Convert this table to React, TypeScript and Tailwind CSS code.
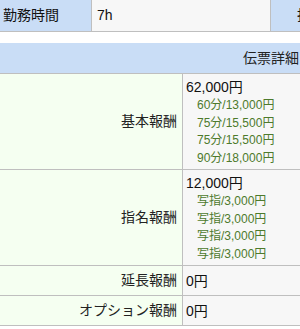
const font = { fontFamily: '"Liberation Sans", "Noto Sans CJK JP", sans-serif' };

type Row = { label: string; total: string; items: string[] };

const rows: Row[] = [
  {
    label: "基本報酬",
    total: "62,000円",
    items: ["60分/13,000円", "75分/15,500円", "75分/15,500円", "90分/18,000円"],
  },
  {
    label: "指名報酬",
    total: "12,000円",
    items: ["写指/3,000円", "写指/3,000円", "写指/3,000円", "写指/3,000円"],
  },
  { label: "延長報酬", total: "0円", items: [] },
  { label: "オプション報酬", total: "0円", items: [] },
];

function DetailRow({ row }: { row: Row }) {
  const tall = row.items.length > 0;
  return (
    <div className="flex border-b border-[#bfbfbf]">
      <div className="flex w-[183px] shrink-0 items-center justify-end border-r border-[#bfbfbf] bg-[#f5fff1] pr-[5px] text-[14px] text-[#222]">
        {row.label}
      </div>
      <div
        className={
          tall
            ? "flex-1 bg-[#f7f7f7] pt-[3px] pb-[2px] pl-[3px]"
            : "flex h-[29px] flex-1 items-center bg-[#f7f7f7] pl-[3px]"
        }
      >
        <div className="text-[14px] leading-[20px] text-[#111]">{row.total}</div>
        {tall && (
          <div className="pl-[11px]">
            {row.items.map((it, i) => (
              <div key={i} className="text-[12px] leading-[17.5px] text-[#4d7a2c]">
                {it}
              </div>
            ))}
          </div>
        )}
      </div>
    </div>
  );
}

export default function App() {
  return (
    <div className="h-[329px] w-[300px] overflow-hidden bg-white" style={font}>
      {/* 勤務時間 */}
      <div className="flex h-[32px] border-b border-[#bfbfbf] text-[14px] text-[#111]">
        <div className="flex w-[92px] shrink-0 items-center border-r border-[#bfbfbf] bg-[#c9ddf6] pl-[3px]">
          勤務時間
        </div>
        <div className="flex w-[179px] shrink-0 items-center border-r border-[#bfbfbf] bg-[#f7f7f7] pl-[5px]">
          7h
        </div>
        <div className="flex flex-1 items-center whitespace-nowrap bg-[#c9ddf6] pl-[26px]">
          指名
        </div>
      </div>

      {/* 伝票詳細 */}
      <div className="mt-[11px] flex h-[31px] items-center justify-end border-b border-[#bfbfbf] bg-[#c9ddf6] pr-[1px] text-[14px] text-[#222]">
        伝票詳細
      </div>

      {rows.map((r) => (
        <DetailRow key={r.label} row={r} />
      ))}
    </div>
  );
}
